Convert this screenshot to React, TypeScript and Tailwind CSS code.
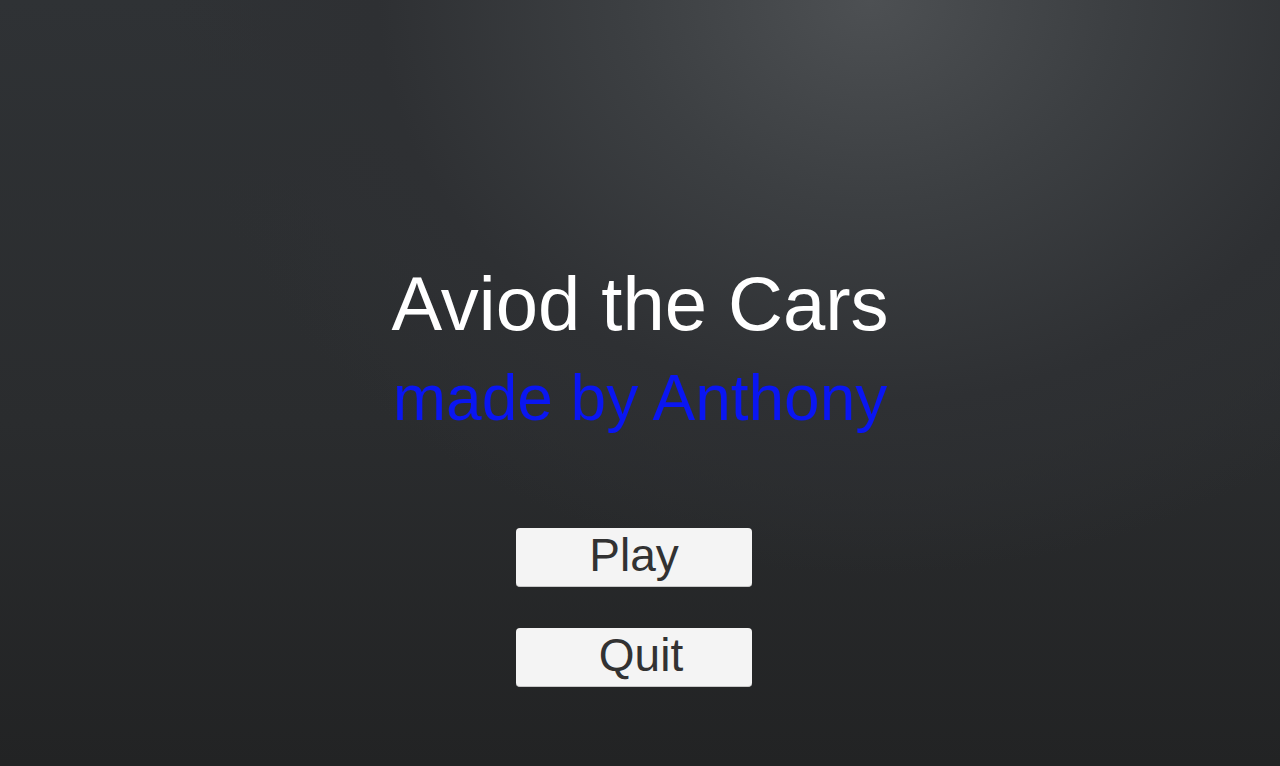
export default function App() {
  return (
    <div
      className="h-[766px] w-full flex flex-col items-center bg-[radial-gradient(ellipse_55%_75%_at_68%_0%,#4d5053_0%,#3c3f42_35%,#2e3033_70%,rgba(40,42,44,0)_100%),linear-gradient(to_bottom,#2f3235_0%,#2a2c2e_55%,#222324_100%)]"
      style={{ fontFamily: '"Liberation Sans", Arial, sans-serif' }}
    >
      <h1 className="mt-[266px] text-[76px] leading-none text-white font-normal">
        Aviod the Cars
      </h1>
      <p className="mt-[24px] text-[64px] leading-none text-[#0a16f2]">
        made by Anthony
      </p>
      <div className="mt-[98px] mr-[12px] flex flex-col items-center gap-[41px]">
        <button className="w-[236px] h-[59px] rounded-[4px] bg-[#f4f4f4] border-b border-[#c8c8c8] text-[46px] leading-none text-[#323232] flex items-center justify-center pb-[4px]">
          Play
        </button>
        <button className="w-[236px] h-[59px] rounded-[4px] bg-[#f4f4f4] border-b border-[#c8c8c8] text-[46px] leading-none text-[#323232] flex items-center justify-center pb-[4px] pl-[14px]">
          Quit
        </button>
      </div>
    </div>
  );
}
